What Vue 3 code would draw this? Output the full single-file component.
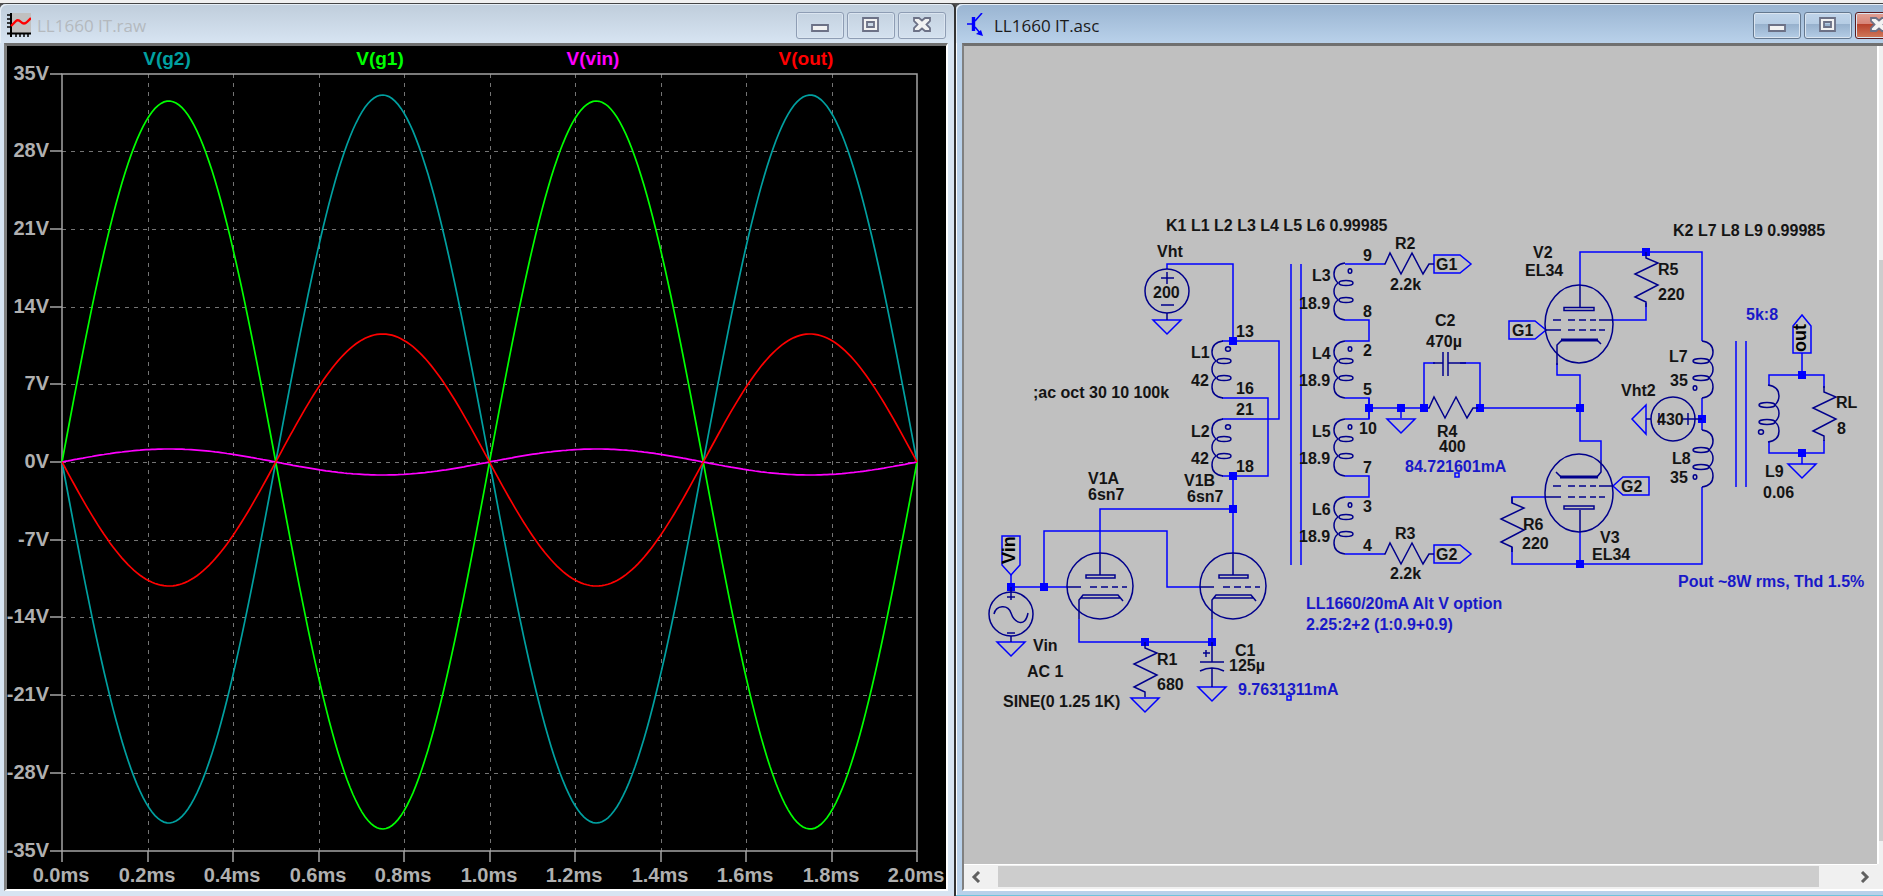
<template>
  <main class="desktop">
    <section class="win win--plot" aria-label="LL1660 IT.raw">
      <header class="win__bar">
        <svg class="win__icon" viewBox="0 0 24 24" aria-hidden="true">
          <rect x="4" width="20" height="20" fill="#c0c0c0" />
          <path d="M4 0V24M0 20.5H24" stroke="#000" stroke-width="2" fill="none" />
          <path d="M0 2H4M0 6H4M0 10H4M0 14H4M9 20V24M13 20V24M17 20V24M21 20V24" stroke="#000" stroke-width="1.5" fill="none" />
          <path d="M4 13L9 8Q11 6 14 9Q17 12 20 9L24 5" stroke="#f00" stroke-width="2.4" fill="none" />
        </svg>
        <h1 class="win__title">LL1660 IT.raw</h1>
        <div class="win__controls">
          <button v-for="b in controls" :key="b.name" class="ctl" type="button" :aria-label="b.name">
            <svg viewBox="0 0 18 16" aria-hidden="true"><path :d="b.path" fill-rule="evenodd" /></svg>
          </button>
        </div>
      </header>
      <div class="win__client">
        <svg class="plot" viewBox="7 46 939 843" preserveAspectRatio="none" role="img" aria-label="Waveforms">
          <g class="plot__grid">
            <path v-for="i in 9" :key="'v' + i" :d="`M${px(i / 5)} 74V851`" />
            <path v-for="i in 9" :key="'h' + i" :d="`M62 ${py(35 - i * 7)}H917`" />
          </g>
          <g class="plot__axis">
            <path d="M62 74H917V851H62Z" />
            <path v-for="i in 11" :key="'x' + i" :d="`M${px((i - 1) / 5)} 851v11`" />
            <path v-for="i in 11" :key="'y' + i" :d="`M50 ${py(42 - i * 7)}h12`" />
          </g>
          <path v-for="t in traces" :key="t.name" class="plot__trace" :d="tracePath(t)" :stroke="t.color" />
          <g class="plot__tick">
            <text v-for="i in 11" :key="'tx' + i" :x="px((i - 1) / 5) - 1" y="882" text-anchor="middle">{{ ((i - 1) / 5).toFixed(1) }}ms</text>
            <text v-for="i in 11" :key="'ty' + i" x="49" :y="py(42 - i * 7) + 6" text-anchor="end">{{ 42 - i * 7 }}V</text>
          </g>
          <g class="plot__legend">
            <text v-for="(t, i) in traces" :key="'l' + t.name" :x="167 + i * 213" y="65" text-anchor="middle" :fill="t.color">{{ t.name }}</text>
          </g>
        </svg>
      </div>
    </section>

    <section class="win win--active" aria-label="LL1660 IT.asc">
      <header class="win__bar">
        <svg class="win__icon win__icon--slim" viewBox="0 0 17 24" aria-hidden="true">
          <path d="M0 11H6M8 8L15 0" stroke="#00f" stroke-width="1.6" fill="none" />
          <path d="M6.5 4V18" stroke="#00f" stroke-width="3.4" />
          <path d="M8 14L13 20" stroke="#00f" stroke-width="1.6" />
          <path d="M16 23L9 21L14 17Z" fill="#00f" />
        </svg>
        <h1 class="win__title">LL1660 IT.asc</h1>
        <div class="win__controls">
          <button v-for="b in controls" :key="b.name" class="ctl" :class="{ 'ctl--close': b.name === 'Close' }" type="button" :aria-label="b.name">
            <svg viewBox="0 0 18 16" aria-hidden="true"><path :d="b.path" fill-rule="evenodd" /></svg>
          </button>
        </div>
      </header>
      <div class="win__client win__client--scroll">
        <svg class="sheet" viewBox="964 46 913 818" preserveAspectRatio="none" role="img" aria-label="Schematic">
          <path v-for="(d, i) in wires" :key="'w' + i" class="wire" :d="d" />
          <path v-for="(g, i) in grounds" :key="'g' + i" class="wire" :d="`M${g[0] - 14} ${g[1]}h28l-14 14z`" />
          <rect v-for="(n, i) in nodes" :key="'n' + i" class="node" :x="n[0] - 4" :y="n[1] - 4" width="8" height="8" />
          <path v-for="(d, i) in symbols" :key="'s' + i" class="part" :d="d" />

          <g v-for="(c, i) in coils" :key="'c' + i" class="part" :transform="`translate(${c.x} ${c.y})${c.flip ? ' scale(-1 1)' : ''}`">
            <path d="M11 0C4 1 0 5 0 11C0 15 2 18 4 20C1 22 0 25 0 28.500C0 32 2 35 4 37C1 39 0 42 0 46C0 52 4 56 11 57" />
            <ellipse cx="12" cy="20" :rx="c.flip ? 8 : 7" ry="2.500" />
            <ellipse cx="12" cy="37" :rx="c.flip ? 8 : 7" ry="2.500" />
            <ellipse :cx="c.flip ? 18 : 16" :cy="c.flip ? 47 : 8" :rx="c.wide ? 2.5 : 1.8" ry="2.300" />
          </g>

          <g v-for="x in [1100, 1233]" :key="'t' + x" class="part" :transform="`translate(${x} 587)`">
            <circle cy="-1" r="33" />
            <path d="M0 -33V-12M-14 -12h29v3h-29zM-33 0h14M-10 0h7M1 0h7M12 0h6M22 0h5M-21 32V13L-17 8H18L23 14M-19 11H20" />
          </g>
          <g class="part">
            <ellipse cx="1579" cy="324" rx="34" ry="39" />
            <path d="M1580 285V307M1564 307.500h30v3h-30zM1553 320h8M1568 320h7M1579 320h7M1590 320h6M1599 320h14M1546 330h15M1568 330h7M1579 330h7M1590 330h6M1599 330h6M1562 340L1557 345V365M1597 340L1601 344" />
            <path class="thick" d="M1561 340H1598" />
            <ellipse cx="1579" cy="493" rx="34" ry="39" />
            <path d="M1580 510V532M1564 506h30v3h-30zM1553 486h8M1568 486h7M1579 486h7M1590 486h6M1599 486h14M1546 497h15M1568 497h7M1579 497h7M1590 497h6M1599 497h6M1561 477L1556 472M1597 477L1601 472V460" />
            <path class="thick" d="M1560 477H1598" />
          </g>

          <g class="part">
            <circle cx="1167" cy="291" r="22" />
            <circle cx="1673" cy="419" r="22" />
            <circle cx="1011" cy="614" r="22" />
          </g>

          <text v-for="(l, i) in labels" :key="'l' + i" class="label" :x="l[0]" :y="l[1]">{{ l[2] }}</text>
          <text v-for="(l, i) in notes" :key="'m' + i" class="label label--note" :x="l[0]" :y="l[1]">{{ l[2] }}</text>
          <text class="label label--net" transform="translate(1015 564) rotate(-90)">Vin</text>
          <text class="label label--net" transform="translate(1806 352) rotate(-90)">out</text>
          <path class="wire" d="M1455 473h4v4h-4zM1287 696h4v4h-4z" />
        </svg>
        <div class="scroll scroll--v" aria-hidden="true"><div class="scroll__thumb"></div></div>
        <div class="scroll scroll--h">
          <button class="scroll__btn" type="button" aria-label="Scroll left">
            <svg viewBox="0 0 10 12"><path d="M8 1L3 6L8 11" /></svg>
          </button>
          <div class="scroll__track"><div class="scroll__thumb"></div></div>
          <button class="scroll__btn scroll__btn--end" type="button" aria-label="Scroll right">
            <svg viewBox="0 0 10 12"><path d="M2 1L7 6L2 11" /></svg>
          </button>
        </div>
        <div class="scroll__corner"></div>
      </div>
    </section>
  </main>
</template>

<script setup>
const controls = [
  { name: 'Minimize', path: 'M1 8h16v6h-16z' },
  { name: 'Maximize', path: 'M1 1h15v13h-15zM5 5v5h7v-5z' },
  { name: 'Close', path: 'M1 1h5l3 2.500l3 -2.500h5v3l-3.500 3.500l3.500 3.500v3h-5l-3 -2.500l-3 2.500h-5v-3l3.500 -3.500l-3.500 -3.500z' },
]

// amp is the fundamental, skew the second harmonic that makes the halves unequal
const traces = [
  { name: 'V(g2)', color: '#00a0a0', amp: -364, skew: 3 },
  { name: 'V(g1)', color: '#00ff00', amp: 364, skew: -3 },
  { name: 'V(vin)', color: '#ff00ff', amp: 13, skew: 0 },
  { name: 'V(out)', color: '#ff0000', amp: -126, skew: 2 },
]

const px = (ms) => Math.round(62 + ms * 427.5)
const py = (volts) => Math.round(462 - volts * 11.1)

function tracePath({ amp, skew }) {
  const points = []
  for (let x = 0; x <= 855; x += 3) {
    const w = (x / 427.5) * 2 * Math.PI
    const y = 462 - amp * Math.sin(w) - (skew * (1 - Math.cos(2 * w))) / 2
    points.push(`${62 + x} ${y.toFixed(1)}`)
  }
  return 'M' + points.join('L')
}

const wires = [
  // supply and primary side
  'M1167 269V264H1233V341H1279V419H1222M1222 341H1233M1222 398H1268V476H1222M1233 476V554M1233 509H1100V554',
  'M1291 264V565M1301 264V565',
  // secondary side
  'M1345 264H1384M1345 320H1369V341H1345M1345 398H1369V419H1345M1345 476H1369V497H1345M1345 554H1384',
  'M1369 408H1428M1369 398V419M1401 408V418M1424 408V363H1435M1460 363H1480V408H1580',
  'M1434 255H1460L1471 264L1460 273H1434ZM1434 545H1460L1471 554L1460 563H1434Z',
  // driver stage
  'M1011 575V587H1067M1044 587V531H1167V587H1200M1079 619V642H1212V619',
  'M1002 536H1020V565L1011 575L1002 565Z',
  // output stage
  'M1580 285V252H1702V341M1613 320H1646V303M1557 363V375H1580V441H1601V460',
  'M1509 321H1535L1546 330L1535 339H1509ZM1649 477H1623L1613 486L1623 495H1649Z',
  'M1546 497H1512V503M1512 547V564H1702V487M1580 532V564M1702 398V430',
  'M1646 405V434L1632 419Z',
  'M1736 341V487M1746 341V487',
  'M1802 315L1793 326V353H1811V326ZM1802 353V375M1769 385V375H1824V388M1824 440V453H1769V442M1802 453V464',
]

const grounds = [[1167, 320], [1401, 419], [1145, 698], [1212, 687], [1011, 642], [1802, 464]]

const nodes = [
  [1233, 341], [1233, 476], [1233, 509], [1369, 408], [1401, 408], [1424, 408], [1480, 408],
  [1580, 408], [1646, 252], [1580, 564], [1702, 419], [1802, 375], [1802, 453],
  [1011, 587], [1044, 587], [1145, 642], [1212, 642],
]

const resistorV = (x, y) => `M${x} ${y}v6l12 5l-23 11l23 11l-23 12l11 5v5`
const resistorH = (x, y) => `M${x} ${y}h1l5 -11l11 21l11 -21l11 21l6 -10h5`

const symbols = [
  resistorV(1145, 642),
  resistorV(1646, 252),
  resistorV(1512, 497),
  resistorV(1824, 386),
  resistorH(1384, 264),
  resistorH(1384, 554),
  resistorH(1428, 408),
  'M1433 363H1443M1443 352V376M1448 352V376M1448 363H1466',
  'M1212 642V662M1200 662H1224M1200 671Q1212 665 1224 671M1212 668V687M1203 653h7M1206 650v7',
  // voltage sources
  'M1161 278h13M1167 272v12M1161 305h13M1167 313v7',
  'M1659 413v12M1688 413v12M1682 419h20M1646 419h5',
  'M1011 587v13M1007 597h8M1007 633h8M1011 636v6M994 614C996 605 1008 604 1011 613S1025 629 1028 613',
]

const coils = [
  { x: 1212, y: 341, wide: true },
  { x: 1212, y: 419, wide: true },
  { x: 1334, y: 263 },
  { x: 1334, y: 341 },
  { x: 1334, y: 419 },
  { x: 1334, y: 497 },
  { x: 1713, y: 341, flip: true },
  { x: 1713, y: 430, flip: true },
  { x: 1779, y: 385, flip: true, wide: true },
]

const labels = [
  [1166, 231, 'K1 L1 L2 L3 L4 L5 L6 0.99985'], [1673, 236, 'K2 L7 L8 L9 0.99985'], [1033, 398, ';ac oct 30 10 100k'],
  [1157, 257, 'Vht'], [1153, 298, '200'],
  [1236, 337, '13'], [1236, 394, '16'], [1236, 415, '21'], [1236, 472, '18'],
  [1191, 358, 'L1'], [1191, 386, '42'], [1191, 437, 'L2'], [1191, 464, '42'],
  [1184, 486, 'V1B'], [1187, 502, '6sn7'], [1088, 484, 'V1A'], [1088, 500, '6sn7'],
  [1312, 281, 'L3'], [1299, 309, '18.9'], [1312, 359, 'L4'], [1299, 386, '18.9'],
  [1312, 437, 'L5'], [1299, 464, '18.9'], [1312, 515, 'L6'], [1299, 542, '18.9'],
  [1363, 261, '9'], [1363, 317, '8'], [1363, 356, '2'], [1363, 395, '5'],
  [1359, 434, '10'], [1363, 473, '7'], [1363, 512, '3'], [1363, 551, '4'],
  [1395, 249, 'R2'], [1390, 290, '2.2k'], [1436, 270, 'G1'],
  [1395, 539, 'R3'], [1390, 579, '2.2k'], [1436, 560, 'G2'],
  [1435, 326, 'C2'], [1426, 347, '470µ'], [1437, 437, 'R4'], [1439, 452, '400'],
  [1533, 258, 'V2'], [1525, 276, 'EL34'], [1658, 275, 'R5'], [1658, 300, '220'], [1512, 336, 'G1'],
  [1621, 492, 'G2'], [1523, 530, 'R6'], [1522, 549, '220'], [1600, 543, 'V3'], [1592, 560, 'EL34'],
  [1669, 362, 'L7'], [1670, 386, '35'], [1672, 464, 'L8'], [1670, 483, '35'],
  [1621, 396, 'Vht2'], [1657, 425, '430'],
  [1836, 408, 'RL'], [1837, 434, '8'], [1765, 477, 'L9'], [1763, 498, '0.06'],
  [1157, 665, 'R1'], [1157, 690, '680'], [1235, 656, 'C1'], [1229, 671, '125µ'],
  [1033, 651, 'Vin'], [1027, 677, 'AC 1'], [1003, 707, 'SINE(0 1.25 1K)'],
]

const notes = [
  [1405, 472, '84.721601mA'], [1238, 695, '9.7631311mA'], [1746, 320, '5k:8'],
  [1306, 609, 'LL1660/20mA Alt V option'], [1306, 630, '2.25:2+2 (1:0.9+0.9)'],
  [1678, 587, 'Pout ~8W rms, Thd 1.5%'],
]
</script>

<style>
body {
  margin: 0;
}
</style>

<style scoped>
.desktop {
  display: grid;
  grid-template-columns: 956fr 927fr;
  height: 100vh;
  box-sizing: border-box;
  padding-top: 3px;
  overflow: hidden;
  background: linear-gradient(180deg, #f0f0f0 0, #f0f0f0 3px, #505050 3px);
}

.win {
  display: flex;
  flex-direction: column;
  min-width: 0;
  box-sizing: border-box;
  padding: 0 6px 5px 4px;
  border-top: 1px solid #444;
  border-right: 2px solid #333;
  border-radius: 6px 6px 0 0;
  background: #d7e4f2;
}

.win--active {
  margin-right: -28px;
  padding: 0 6px 4px 6px;
  border-bottom: 1px solid #6fc4dc;
  background: #b9d1ea;
  box-shadow: inset 1px 0 #fff;
}

.win__bar {
  flex: 0 0 39px;
  display: flex;
  align-items: center;
  margin: 0 -6px 0 -4px;
  padding: 3px 8px 0 7px;
  box-sizing: border-box;
  border-radius: 6px 6px 0 0;
  background: linear-gradient(180deg, #bfcddb, #d7e4f2);
  box-shadow: inset 1px 1px #e6eef6;
}

.win--active .win__bar {
  margin: 0 -6px;
  padding-right: 6px;
  padding-left: 11px;
  background: linear-gradient(180deg, #99b4d1, #b9d1ea);
}

.win__icon {
  width: 24px;
  height: 24px;
}

.win__icon--slim {
  width: 17px;
  margin-right: 4px;
}

.win__title {
  flex: 1;
  margin: 0 6px;
  padding-top: 2px;
  font: 400 17px/24px "Open Sans", "Noto Sans", sans-serif;
  color: #b4b9be;
}

.win--active .win__title {
  color: #1b1b1b;
}

.win__controls {
  display: flex;
  gap: 3px;
}

.ctl {
  display: grid;
  place-items: center;
  width: 48px;
  height: 27px;
  padding: 0;
  border: 1px solid #8e9db4;
  border-radius: 3px;
  background: transparent;
  box-shadow: inset 0 0 0 1px #dbe5f0;
}

.ctl svg {
  width: 18px;
  height: 16px;
}

.ctl path {
  fill: #f2f2f2;
  stroke: #6c7186;
  stroke-width: 1.8;
}

.win--active .ctl {
  border-color: #64788f;
  background: linear-gradient(180deg, #c0d4e9 0, #b5cce4 45%, #97b1cd 46%, #b4cde6 100%);
}

.win--active .ctl--close {
  border-color: #5b1a1e;
  background: linear-gradient(180deg, #e2a297 0, #d68376 45%, #b8422c 46%, #d07a5c 100%);
}

.win__client {
  flex: 1;
  min-height: 0;
  display: flex;
  border: solid;
  border-width: 3px 2px 2px 3px;
  border-color: #707070 #fff #fff #808080;
  background: #000;
}

.win__client--scroll {
  display: grid;
  grid-template: minmax(0, 1fr) 25px / minmax(0, 1fr) 26px;
  border-left-width: 2px;
  border-right-width: 0;
  background: #f0f0f0;
}

.plot,
.sheet {
  display: block;
  width: 100%;
  height: 100%;
}

.plot {
  font: bold 20px "Liberation Sans", Arial, sans-serif;
}

.plot__grid {
  fill: none;
  stroke: #747474;
  stroke-width: 1;
  stroke-dasharray: 4 5;
  shape-rendering: crispEdges;
}

.plot__axis {
  fill: none;
  stroke: #a4a4a4;
  stroke-width: 1.5;
}

.plot__trace {
  fill: none;
  stroke-width: 1.7;
}

.plot__tick {
  fill: #b0b0b0;
}

.plot__legend {
  font-size: 19px;
}

.sheet {
  background: #c0c0c0;
}

.wire {
  fill: none;
  stroke: #0000ff;
  stroke-width: 1.5;
}

.part {
  fill: none;
  stroke: #00008c;
  stroke-width: 1.5;
}

.thick {
  stroke-width: 3;
}

.node {
  fill: #0000ff;
}

.label {
  font: bold 16px "Liberation Sans", Arial, sans-serif;
  fill: #141414;
}

.label--note {
  fill: #1818c8;
}

.label--net {
  font-size: 18px;
  fill: #000;
}

.scroll--v {
  display: flex;
  flex-direction: column;
  border-left: 2px solid #fff;
}

.scroll--v .scroll__thumb {
  flex: 0 0 71%;
  margin-top: 214px;
}

.scroll--h {
  display: flex;
  border-top: 1px solid #fff;
}

.scroll__track {
  flex: 1;
  display: flex;
}

.scroll__track .scroll__thumb {
  flex: 0 0 96%;
  margin: 1px 0 2px;
}

.scroll__thumb {
  background: #cdcdcd;
}

.scroll__btn {
  display: grid;
  place-items: center;
  width: 34px;
  padding: 0 10px 0 0;
  border: 0;
  background: transparent;
}

.scroll__btn--end {
  width: 24px;
  padding: 0;
}

.scroll__btn svg {
  width: 10px;
  height: 12px;
}

.scroll__btn path {
  fill: none;
  stroke: #606060;
  stroke-width: 3;
}
</style>
